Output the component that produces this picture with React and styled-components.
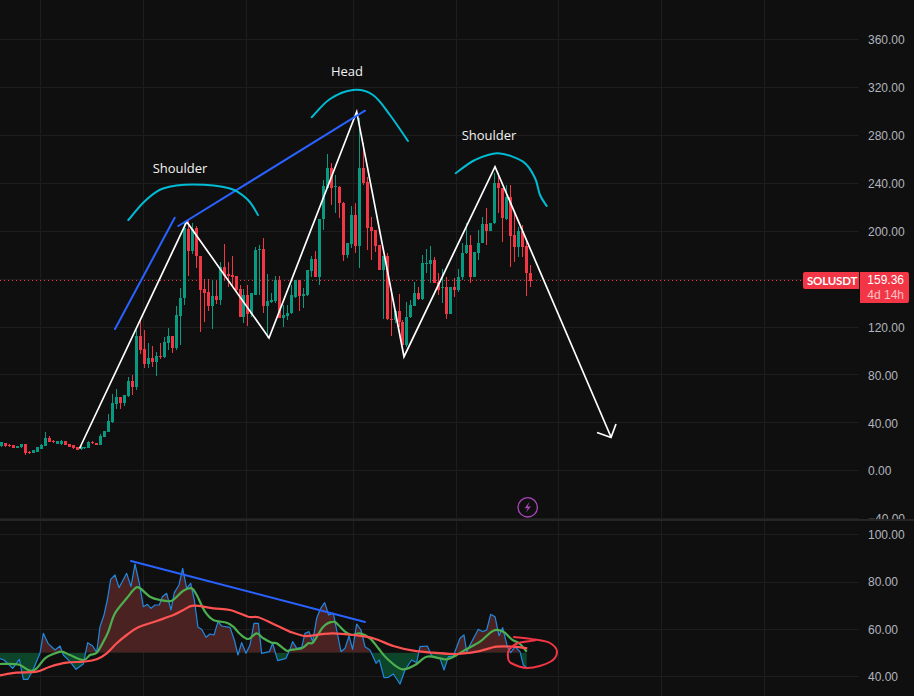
import React from 'react'
import styled, { createGlobalStyle } from 'styled-components'

const GREEN = '#089981'
const RED = '#f23645'
const CHART_W = 859
const MAIN_H = 519
const OSC_H = 175
const OSC_TOP = 521

const gridX = [40.5, 143.5, 246.5, 353.5, 456.5, 558.5, 661.5, 764.5]
const mainGridY = Array.from({ length: 11 }, (_, i) => Math.floor(39.3 + 47.95 * i) + 0.5)
const oscGridY = [13.5, 61.5, 108.5, 155.5]

const mainLabels = ['360.00', '320.00', '280.00', '240.00', '200.00', '', '120.00', '80.00', '40.00', '0.00', '−40.00']
const oscLabels = ['100.00', '80.00', '60.00', '40.00']

// candles read off the chart: wick top, body top, body bottom, wick bottom, side
// left run is measured from y=130, right run from y=60, both at 3x
const leftCandles = [
  [935, 937, 948, 950, 'g'], [938, 940, 948, 950, 'r'], [942, 945, 948, 952, 'r'], [945, 946, 954, 955, 'r'],
  [947, 947, 953, 954, 'g'], [942, 942, 952, 953, 'g'], [942, 942, 968, 975, 'r'], [964, 966, 969, 972, 'r'],
  [960, 960, 968, 969, 'g'], [952, 952, 965, 966, 'g'], [943, 945, 956, 958, 'g'], [907, 924, 948, 949, 'g'],
  [918, 924, 936, 937, 'r'], [930, 932, 935, 938, 'r'], [933, 933, 942, 943, 'g'], [931, 932, 943, 944, 'g'],
  [932, 932, 945, 946, 'r'], [942, 942, 950, 951, 'r'], [945, 945, 955, 956, 'r'], [950, 950, 960, 961, 'r'],
  [948, 950, 958, 960, 'g'], [950, 952, 955, 956, 'g'], [934, 936, 953, 954, 'g'], [933, 936, 939, 943, 'r'],
  [938, 938, 945, 946, 'r'], [912, 918, 945, 946, 'g'], [902, 902, 921, 922, 'g'], [853, 873, 905, 906, 'g'],
  [793, 820, 876, 878, 'g'], [778, 800, 822, 836, 'g'], [800, 800, 820, 836, 'r'], [795, 795, 820, 828, 'g'],
  [742, 753, 798, 800, 'g'], [735, 753, 772, 795, 'r'], [600, 618, 770, 780, 'g'], [570, 618, 660, 672, 'r'],
  [600, 657, 702, 715, 'r'], [640, 684, 702, 715, 'g'], [648, 684, 696, 710, 'r'], [665, 678, 696, 737, 'g'],
  [640, 678, 682, 688, 'r'], [622, 636, 682, 683, 'g'], [594, 618, 638, 660, 'g'], [618, 618, 654, 668, 'r'],
  [528, 555, 654, 660, 'g'], [474, 504, 557, 645, 'g'], [280, 295, 505, 525, 'g'], [270, 297, 362, 438, 'r'],
  [280, 297, 362, 372, 'g'], [288, 295, 378, 415, 'r'], [378, 378, 480, 605, 'r'], [447, 477, 488, 575, 'r'],
  [448, 487, 527, 543, 'r'], [450, 497, 527, 597, 'g'], [450, 497, 510, 523, 'r'], [395, 410, 510, 525, 'g'],
  [343, 410, 437, 450, 'r'], [395, 432, 438, 470, 'r'], [378, 435, 440, 470, 'r'], [437, 437, 480, 490, 'r'],
  [465, 477, 560, 561, 'r'], [478, 495, 560, 580, 'g'], [465, 495, 552, 588, 'r'], [490, 490, 552, 560, 'g'],
  [350, 360, 495, 496, 'g'], [345, 357, 360, 495, 'g'], [323, 357, 527, 550, 'r'], [432, 513, 527, 625, 'g'],
  [490, 510, 515, 520, 'g'], [437, 450, 513, 520, 'g'], [437, 450, 563, 564, 'r'], [525, 555, 563, 590, 'g'],
  [525, 548, 558, 570, 'g'], [465, 495, 550, 552, 'g'], [450, 450, 500, 505, 'g'], [450, 450, 497, 542, 'r'],
]

const rightCandles = [
  [683, 702, 708, 745, 'g'], [630, 630, 705, 708, 'g'], [588, 598, 632, 650, 'g'], [573, 598, 650, 652, 'r'],
  [478, 478, 650, 675, 'g'], [360, 378, 478, 510, 'g'], [282, 323, 383, 385, 'g'], [310, 323, 383, 435, 'r'],
  [345, 378, 381, 458, 'g'], [378, 380, 428, 475, 'r'], [425, 428, 584, 602, 'r'], [548, 548, 584, 595, 'g'],
  [438, 465, 552, 565, 'g'], [430, 465, 557, 578, 'r'], [175, 323, 557, 623, 'g'], [250, 323, 368, 375, 'r'],
  [350, 366, 503, 570, 'r'], [470, 500, 513, 600, 'r'], [510, 510, 558, 575, 'r'], [555, 555, 630, 631, 'r'],
  [588, 588, 630, 778, 'g'], [580, 588, 778, 779, 'r'], [700, 777, 780, 828, 'r'], [753, 753, 780, 790, 'g'],
  [703, 753, 785, 800, 'r'], [780, 785, 855, 856, 'r'], [725, 770, 855, 860, 'g'], [720, 735, 772, 773, 'g'],
  [665, 698, 738, 739, 'g'], [680, 698, 718, 719, 'r'], [585, 610, 718, 719, 'g'], [568, 609, 612, 640, 'g'],
  [558, 600, 612, 670, 'g'], [590, 600, 668, 669, 'r'], [640, 665, 690, 705, 'r'], [628, 680, 682, 730, 'g'],
  [650, 682, 762, 778, 'r'], [680, 682, 762, 763, 'g'], [655, 682, 690, 710, 'r'], [628, 650, 690, 695, 'g'],
  [548, 578, 652, 660, 'g'], [490, 555, 580, 582, 'g'], [525, 555, 652, 670, 'r'], [575, 575, 650, 651, 'g'],
  [510, 548, 578, 600, 'g'], [470, 492, 548, 549, 'g'], [445, 492, 513, 555, 'r'], [490, 490, 513, 514, 'g'],
  [340, 370, 490, 491, 'g'], [340, 370, 385, 460, 'r'], [385, 385, 475, 545, 'r'], [375, 410, 477, 480, 'g'],
  [375, 410, 527, 620, 'r'], [460, 525, 560, 605, 'r'], [500, 513, 560, 590, 'g'], [495, 513, 560, 590, 'r'],
  [545, 558, 640, 708, 'r'], [615, 640, 662, 680, 'r'],
]

const candles = [
  ...leftCandles.map(c => ({ c, top: 130 })),
  ...rightCandles.map(c => ({ c, top: 60 })),
].map(({ c, top }, i) => {
  const [wt, bt, bb, wb, side] = c
  const y = v => Math.round(top + v / 3)
  return { x: Math.round(1 + 3.975 * i) + 0.5, wt: y(wt), bt: y(bt), bb: y(bb), wb: y(wb), side }
})

// oscillator curves, same 3x crops: x from 0 or 290, y from the pane's crop at 520
const fromCrops = (a, b) => [
  ...a.map(([x, y]) => [x / 3, 520 + y / 3 - OSC_TOP]),
  ...b.map(([x, y]) => [290 + x / 3, 520 + y / 3 - OSC_TOP]),
]

const rsi = fromCrops(
  [[0,416],[12,420],[38,445],[58,418],[70,478],[84,478],[100,448],[120,400],[130,340],[144,370],[165,390],[180,378],[190,405],[210,425],[228,448],[250,432],[263,368],[278,378],[290,397],[300,320],[312,285],[322,240],[332,178],[345,165],[357,203],[380,160],[393,200],[405,132],[418,190],[430,260],[442,253],[453,265],[465,255],[478,255],[487,230],[500,220],[513,270],[523,218],[537,195],[548,145],[560,205],[572,190],[583,240],[594,322],[605,328],[618,352],[630,342],[642,345],[654,305],[665,318],[690,322],[703,360],[714,405],[725,368],[738,400],[750,375],[762,310],[775,310],[785,400],[808,395],[818,370],[833,422],[858,415],[870,388]],
  [[0,388],[8,365],[20,385],[35,382],[45,340],[57,335],[68,365],[80,295],[92,265],[104,248],[116,285],[130,280],[153,395],[165,385],[177,348],[188,388],[200,312],[213,330],[225,380],[240,390],[258,430],[268,420],[282,473],[295,472],[310,462],[330,492],[345,450],[365,420],[380,428],[390,380],[412,378],[425,408],[450,415],[462,450],[475,410],[490,408],[510,355],[522,345],[530,395],[545,365],[565,328],[578,335],[590,330],[602,283],[615,290],[627,347],[638,323],[652,380],[662,398],[675,380],[690,395],[700,435],[710,443]],
)

const rsiMa = fromCrops(
  [[0,432],[40,432],[60,435],[90,452],[110,445],[135,415],[160,402],[185,395],[210,405],[250,420],[270,405],[290,398],[310,365],[325,335],[345,280],[380,235],[405,205],[420,205],[450,230],[480,240],[515,242],[550,212],[575,205],[590,225],[615,275],[640,300],[680,308],[700,320],[720,342],[745,357],[770,340],[790,355],[815,368],[830,370],[860,392]],
  [[0,390],[35,385],[55,370],[70,367],[100,320],[130,305],[145,315],[165,335],[185,345],[210,340],[240,355],[265,385],[290,415],[335,448],[375,435],[410,410],[450,415],[470,418],[500,405],[525,390],[570,365],[610,332],[640,335],[665,358],[690,372],[710,395]],
)

const slowMa = fromCrops(
  [[0,466],[50,458],[110,455],[150,440],[200,428],[250,425],[290,418],[320,400],[350,370],[380,345],[415,322],[470,303],[520,285],[550,270],[580,257],[640,265],[690,270],[745,290],[775,292],[820,312],[870,335]],
  [[0,335],[45,348],[90,343],[130,340],[190,345],[250,355],[310,378],[370,392],[430,398],[500,402],[560,395],[620,380],[670,380],[712,385]],
)

const MID_Y = 520 + 398 / 3 - OSC_TOP

const line = pts => pts.map(p => p.join(',')).join(' ')

// catmull-rom through the points, for the hand drawn looking curves
const smooth = pts => {
  let d = `M${pts[0][0]} ${pts[0][1]}`
  for (let i = 0; i < pts.length - 1; i++) {
    const p0 = pts[i - 1] || pts[i]
    const p1 = pts[i]
    const p2 = pts[i + 1]
    const p3 = pts[i + 2] || p2
    const c1 = [p1[0] + (p2[0] - p0[0]) / 6, p1[1] + (p2[1] - p0[1]) / 6]
    const c2 = [p2[0] - (p3[0] - p1[0]) / 6, p2[1] - (p3[1] - p1[1]) / 6]
    d += ` C${c1[0].toFixed(1)} ${c1[1].toFixed(1)} ${c2[0].toFixed(1)} ${c2[1].toFixed(1)} ${p2[0].toFixed(1)} ${p2[1].toFixed(1)}`
  }
  return d
}

const arcs = [
  [[128.3,220],[145,201],[163,188.5],[193,184.5],[230,188.5],[248,200],[258,215]],
  [[311.7,117.3],[330,99],[353,90],[373,95],[390,115],[408,141]],
  [[455.7,173.3],[475,160],[498,153.3],[523,161.7],[535,178],[540,195],[546.7,206]],
]

const circled = [
  [514,637],[535,640],[518,643],[509,650],[508,657],[511,663],[528,668],[550,662],[557,652],[550,643],[535,639.5],[514,637],
].map(([x, y]) => [x, y - OSC_TOP])

const GlobalStyle = createGlobalStyle`
  html, body {
    margin: 0;
    height: 100%;
    background: #0f0f0f;
    overflow: hidden;
  }
`

const Workspace = styled.div`
  width: 914px;
  height: 696px;
  position: relative;
  background: #0f0f0f;
  font-family: "Liberation Sans", Arial, sans-serif;
  overflow: hidden;
`

const Pane = styled.section`
  display: flex;
  height: ${p => p.height}px;
  overflow: hidden;
`

const PaneDivider = styled.div`
  height: 2px;
  background: #262626;
`

const ChartSvg = styled.svg`
  display: block;
  flex: none;
  width: ${CHART_W}px;
  height: 100%;
`

const Scale = styled.div`
  flex: 1;
  display: flex;
  flex-direction: column;
  padding-top: ${p => p.top}px;
  padding-left: 9px;
`

const ScaleLabel = styled.div`
  flex: none;
  height: ${p => p.step}px;
  font-size: 12px;
  line-height: 14px;
  color: #b2b5be;
`

const SymbolTag = styled.div`
  position: absolute;
  left: 803px;
  top: 272px;
  width: 56px;
  height: 17px;
  box-sizing: border-box;
  padding-left: 4px;
  background: ${RED};
  border-radius: 2px 0 0 2px;
  color: #fff;
  font-family: Lato, "Liberation Sans", sans-serif;
  font-size: 11.5px;
  font-weight: 700;
  letter-spacing: -0.2px;
  line-height: 17px;
  white-space: nowrap;
`

const PriceTag = styled.div`
  position: absolute;
  left: 860px;
  top: 272px;
  width: 49px;
  height: 31px;
  box-sizing: border-box;
  padding: 1px 5px 0 0;
  background: ${RED};
  border-radius: 0 2px 2px 0;
  color: #fff;
  font-size: 12px;
  line-height: 15px;
  text-align: right;
`

const Countdown = styled.div`
  opacity: 0.68;
`

const Note = styled.text`
  font-family: "Open Sans", sans-serif;
  font-size: 13px;
  fill: #f2f2f2;
  text-anchor: middle;
`

const Grid = ({ rows }) => (
  <g stroke="#1d1d1d" strokeWidth="1">
    {rows.map(y => <line key={y} x1="0" x2={CHART_W} y1={y} y2={y} />)}
    {gridX.map(x => <line key={x} x1={x} x2={x} y1="0" y2="700" />)}
  </g>
)

const Candle = ({ x, wt, bt, bb, wb, side }) => {
  const color = side === 'g' ? GREEN : RED
  return (
    <g>
      <line x1={x} x2={x} y1={wt} y2={wb} stroke={color} strokeWidth="1" />
      <rect x={x - 1.5} y={bt} width="3" height={Math.max(bb - bt, 1)} fill={color} />
    </g>
  )
}

const MainChart = () => (
  <ChartSvg viewBox={`0 0 ${CHART_W} ${MAIN_H}`}>
    <Grid rows={mainGridY} />
    <line x1="0" x2="803" y1="280.5" y2="280.5" stroke={RED} strokeWidth="1" strokeDasharray="1 3" />
    {candles.map(c => <Candle key={c.x} {...c} />)}
    <g fill="none" stroke="#fff" strokeWidth="1.7" strokeLinejoin="miter">
      <polyline points="79.5,448.5 186.7,221.7 269,338 356.7,111.7 404,356.7 495,166.7 611,437" />
      <polyline points="597,432.5 611,437.5 616,424" />
    </g>
    <g stroke="#2962ff" strokeWidth="2" strokeLinecap="round">
      <line x1="115" y1="329" x2="174.7" y2="217.7" />
      <line x1="178.3" y1="226" x2="365" y2="110.7" />
    </g>
    <g fill="none" stroke="#00bcd4" strokeWidth="2" strokeLinecap="round">
      {arcs.map((a, i) => <path key={i} d={smooth(a)} />)}
    </g>
    <Note x="180" y="172.5">Shoulder</Note>
    <Note x="347" y="75.5">Head</Note>
    <Note x="489" y="139.5">Shoulder</Note>
    <g fill="none" stroke="#ab47bc">
      <circle cx="527.7" cy="507.3" r="9.7" strokeWidth="1.3" />
      <path d="M529.6 501.8 L524.6 508.2 H527.8 L525.9 512.8 L530.9 506.4 H527.7 Z" fill="#ab47bc" stroke="none" />
    </g>
  </ChartSvg>
)

const OscChart = () => {
  const area = `0,${MID_Y} ${line(rsi)} ${rsi[rsi.length - 1][0]},${MID_Y}`
  return (
    <ChartSvg viewBox={`0 0 ${CHART_W} ${OSC_H}`}>
      <defs>
        <clipPath id="above"><rect x="0" y="0" width={CHART_W} height={MID_Y} /></clipPath>
        <clipPath id="below"><rect x="0" y={MID_Y} width={CHART_W} height={OSC_H} /></clipPath>
      </defs>
      <Grid rows={oscGridY} />
      <polygon points={area} fill="#4a2222" clipPath="url(#above)" />
      <polygon points={area} fill="#0d452a" clipPath="url(#below)" />
      <polyline points={line(rsi)} fill="none" stroke="#2188e0" strokeWidth="1.2" strokeLinejoin="round" />
      <path d={smooth(rsiMa)} fill="none" stroke="#4caf50" strokeWidth="2.2" />
      <path d={smooth(slowMa)} fill="none" stroke="#ff5252" strokeWidth="2.2" />
      <line x1="131" y1={561 - OSC_TOP} x2="365" y2={622 - OSC_TOP} stroke="#2962ff" strokeWidth="2" strokeLinecap="round" />
      <path d={smooth(circled)} fill="none" stroke={RED} strokeWidth="2" strokeLinecap="round" />
    </ChartSvg>
  )
}

export default function App() {
  return (
    <>
      <GlobalStyle />
      <Workspace>
        <Pane height={MAIN_H}>
          <MainChart />
          <Scale top={33}>
            {mainLabels.map((l, i) => <ScaleLabel key={i} step={47.95}>{l}</ScaleLabel>)}
          </Scale>
        </Pane>
        <PaneDivider />
        <Pane height={OSC_H}>
          <OscChart />
          <Scale top={7}>
            {oscLabels.map(l => <ScaleLabel key={l} step={47.33}>{l}</ScaleLabel>)}
          </Scale>
        </Pane>
        <SymbolTag>SOLUSDT</SymbolTag>
        <PriceTag>
          159.36
          <Countdown>4d 14h</Countdown>
        </PriceTag>
      </Workspace>
    </>
  )
}
